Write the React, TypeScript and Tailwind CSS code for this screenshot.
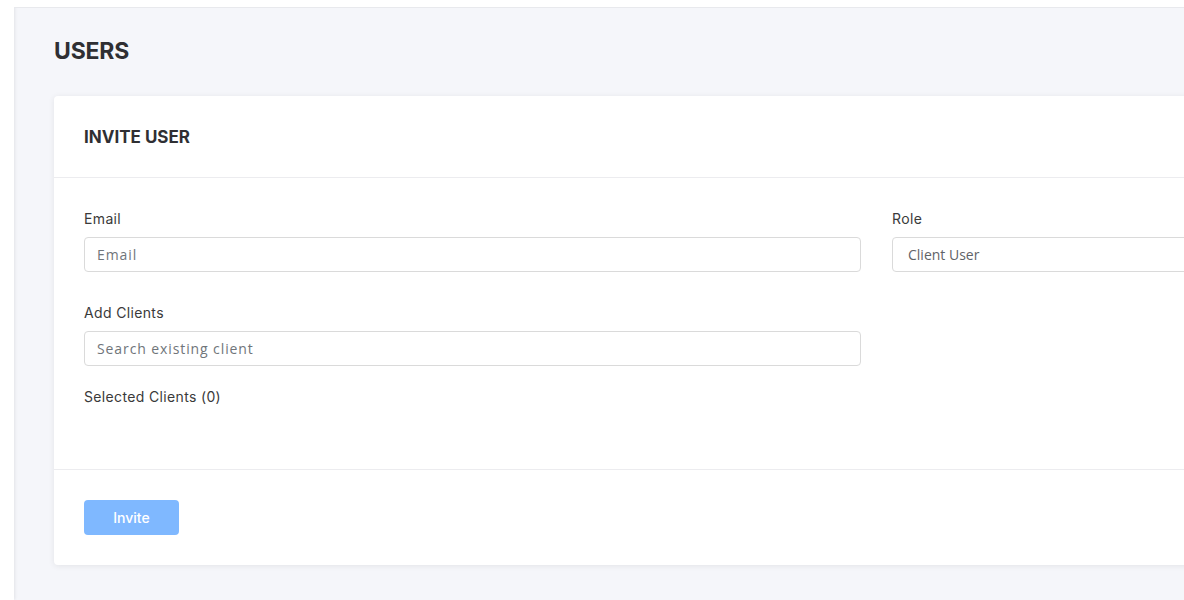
import React from "react";

const heading = "font-['Inter','Noto_Sans',sans-serif]";
const field = "font-['Open_Sans','Noto_Sans',sans-serif]";

function Label({ children }: { children: React.ReactNode }) {
  return (
    <label className={`mb-2 block text-[14px] leading-[21px] tracking-[0.35px] text-[#3a3a3a] ${heading}`}>
      {children}
    </label>
  );
}

export default function App() {
  return (
    <div className="flex h-[600px] w-[1184px] overflow-hidden bg-[#f5f6fa]">
      <aside className="w-[14px] shrink-0 bg-white shadow-[1px_0_3px_rgba(0,0,0,0.08)]" />

      <div className="flex min-w-0 flex-1 flex-col">
        <div className="h-[8px] shrink-0 border-b border-[#e8e9ed] bg-white" />

        <main className="pl-[40px] pt-[31px]">
          <h1 className={`text-[23px] font-bold leading-[24px] tracking-[-0.2px] text-[#2f2f33] ${heading}`}>
            USERS
          </h1>

          <section className="mt-[33px] w-[1240px] rounded-[4px] bg-white shadow-[0_1px_6px_rgba(0,0,0,0.08)]">
            <div className="flex h-[82px] items-center border-b border-[#ececef] px-[30px] pt-[2px]">
              <h2 className={`text-[17px] font-bold text-[#2f2f33] ${heading}`}>INVITE USER</h2>
            </div>

            <div className="px-[30px] py-[30px]">
              <div className="grid grid-cols-[777px_1fr] gap-x-[31px]">
                <div>
                  <Label>Email</Label>
                  <input
                    placeholder="Email"
                    className={`h-[35px] w-full rounded-[4px] border border-[#dadada] px-[12px] text-[14px] tracking-[0.9px] text-[#555] placeholder:text-[#70757a] outline-none ${field}`}
                  />
                </div>
                <div>
                  <Label>Role</Label>
                  <div
                    className={`flex h-[35px] w-[373px] items-center rounded-[4px] border border-[#dadada] px-[15px] text-[14px] text-[#5f6368] ${field}`}
                  >
                    Client User
                  </div>
                </div>
              </div>

              <div className="mt-[30px] w-[777px]">
                <Label>Add Clients</Label>
                <input
                  placeholder="Search existing client"
                  className={`h-[35px] w-full rounded-[4px] border border-[#dadada] px-[12px] text-[14px] tracking-[0.9px] text-[#555] placeholder:text-[#70757a] outline-none ${field}`}
                />
              </div>

              <p className={`mt-[20px] mb-[32px] text-[14px] leading-[21px] tracking-[0.35px] text-[#3a3a3a] ${heading}`}>
                Selected Clients (0)
              </p>
            </div>

            <div className="border-t border-[#ececef] px-[30px] py-[30px]">
              <button
                type="button"
                disabled
                className={`h-[35px] w-[95px] rounded-[4px] bg-[#7fb8ff] text-[14px] font-medium text-white ${heading}`}
              >
                Invite
              </button>
            </div>
          </section>
        </main>
      </div>
    </div>
  );
}
